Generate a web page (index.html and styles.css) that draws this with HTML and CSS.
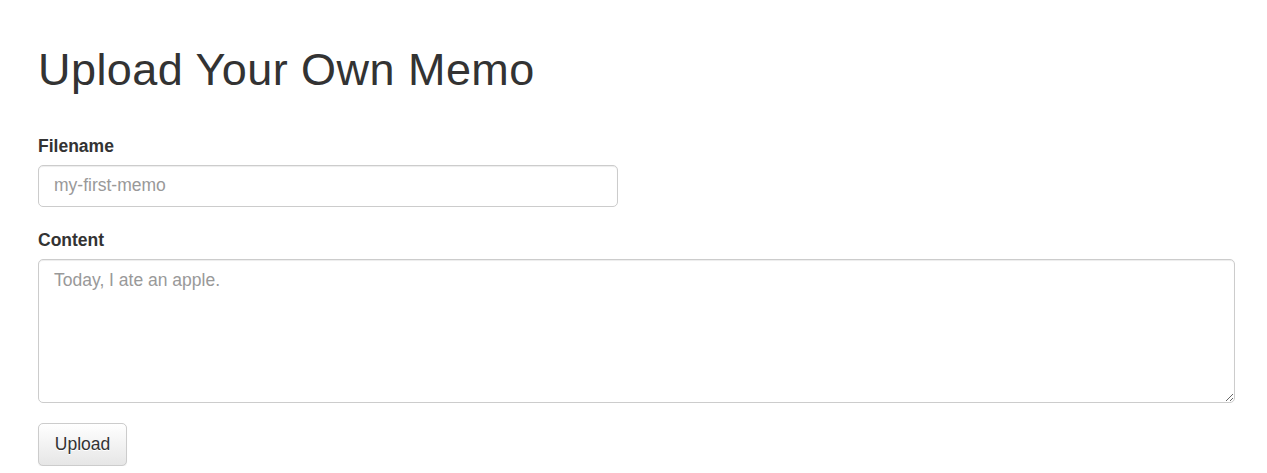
FILE: index.html
```html
<!DOCTYPE html>
<html lang="en">
<head>
<meta charset="utf-8">
<title>Upload Your Own Memo</title>
<link rel="stylesheet" href="styles.css">
</head>
<body>
<div class="container">
  <h1 class="title">Upload Your Own Memo</h1>
  <form class="memo-form">
    <div class="form-group">
      <label class="form-label" for="filename">Filename</label>
      <input class="form-control input-short" id="filename" type="text" placeholder="my-first-memo">
    </div>
    <div class="form-group form-group-last">
      <label class="form-label" for="content">Content</label>
      <textarea class="form-control textarea" id="content" rows="5" placeholder="Today, I ate an apple."></textarea>
    </div>
    <button class="btn btn-default" type="button">Upload</button>
  </form>
</div>
</body>
</html>
```

FILE: styles.css
```css
* { box-sizing: border-box; }
html, body { margin: 0; padding: 0; background: #fff; }
body {
  font-family: "Liberation Sans", Arial, Helvetica, sans-serif;
  font-size: 17.5px;
  line-height: 1.42857;
  color: #333;
}
.container {
  padding: 0 32px 0 38px;
}
.title {
  font-family: "Liberation Sans", Arial, Helvetica, sans-serif;
  font-weight: 500;
  font-size: 45px;
  letter-spacing: 0.45px;
  line-height: 1.1;
  color: #333;
  margin: 45px 0 39px;
}
.memo-form { margin: 0; }
.form-group { margin-bottom: 21px; }
.form-group-last { margin-bottom: 20px; }
.form-label {
  display: inline-block;
  font-weight: 700;
  margin-bottom: 6.25px;
  max-width: 100%;
}
.form-control {
  display: block;
  width: 100%;
  height: 42.5px;
  padding: 7.5px 15px;
  font-family: "Liberation Sans", Arial, Helvetica, sans-serif;
  font-size: 17.5px;
  line-height: 1.42857;
  color: #555;
  background-color: #fff;
  border: 1.25px solid #ccc;
  border-radius: 5px;
  box-shadow: inset 0 1px 1px rgba(0,0,0,.075);
  margin: 0;
}
.form-control::placeholder { color: #999; opacity: 1; }
.input-short { width: 580px; }
.textarea {
  height: 144px;
  resize: vertical;
  overflow: auto;
}
.btn {
  display: inline-block;
  min-width: 89px;
  height: 42.75px;
  padding: 7.5px 15px;
  font-family: "Liberation Sans", Arial, Helvetica, sans-serif;
  font-size: 17.5px;
  line-height: 1.42857;
  text-align: center;
  border-radius: 5px;
  cursor: pointer;
  margin: 0;
}
.btn-default {
  color: #333;
  border: 1.25px solid #ccc;
  background-color: #e8e8e8;
  background-image: linear-gradient(to bottom, #fff 0, #e6e6e6 100%);
  text-shadow: 0 1px 0 #fff;
  box-shadow: inset 0 1px 0 rgba(255,255,255,.15), 0 1px 1px rgba(0,0,0,.075);
}
```
